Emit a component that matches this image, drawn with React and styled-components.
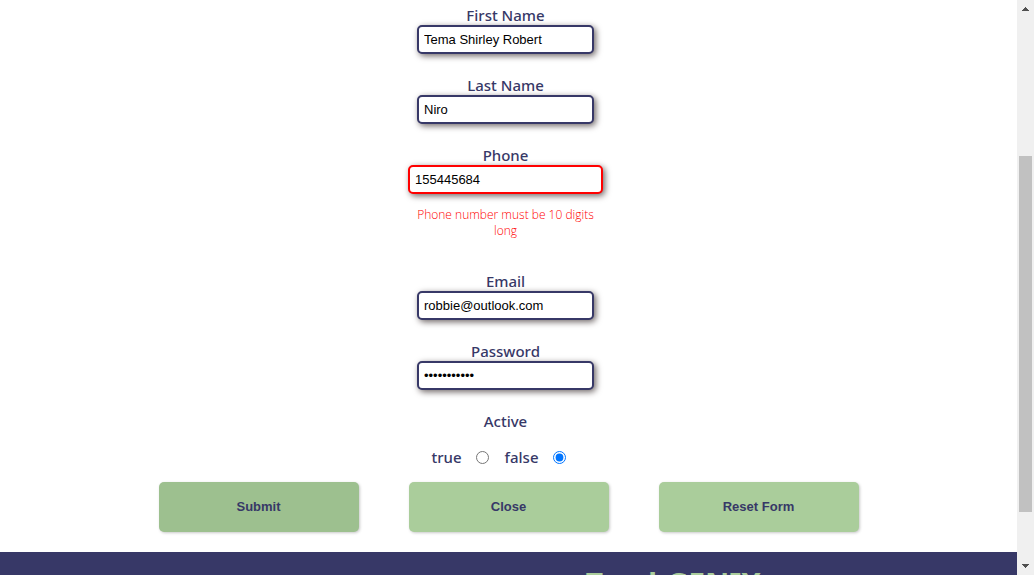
import React, { useState } from 'react';
import styled, { createGlobalStyle } from 'styled-components';

const navy = '#373867';
const green = '#aacd9b';

const GlobalStyle = createGlobalStyle`
  * { box-sizing: border-box; }
  body {
    margin: 0;
    background: #fff;
    color: ${navy};
    font-family: 'Noto Sans', 'Open Sans', sans-serif;
  }
`;

const Shell = styled.div`
  display: flex;
  height: 100vh;
  overflow: hidden;
`;

const Page = styled.div`
  flex: 1;
  min-width: 0;
  overflow: hidden;
`;

const Form = styled.form`
  display: flex;
  flex-direction: column;
  align-items: center;
  padding: 5px 0 20px;
`;

const Fields = styled.div`
  display: flex;
  flex-direction: column;
  align-items: center;
  gap: 21px;
  padding-right: 6px;
`;

const Field = styled.div`
  display: flex;
  flex-direction: column;
  align-items: center;
`;

const Label = styled.label`
  font-size: 15px;
  font-weight: 500;
  line-height: 20px;
`;

const Input = styled.input`
  width: ${({ $invalid }) => ($invalid ? 195 : 177)}px;
  height: 29px;
  padding: 0 5px;
  border: 2px solid ${({ $invalid }) => ($invalid ? '#f00' : navy)};
  border-radius: 5px;
  background: #fff;
  color: #000;
  font-family: 'Liberation Sans', Arial, sans-serif;
  font-size: 13px;
  box-shadow: 2px 2px 6px #706868;
  outline: none;
`;

const ErrorText = styled.p`
  width: 182px;
  margin: 13px 0 11px;
  color: #f00;
  font-family: 'Open Sans', 'Noto Sans', sans-serif;
  font-size: 12px;
  font-weight: 300;
  line-height: 16px;
  text-align: center;
`;

const RadioGroup = styled.fieldset`
  min-width: 0;
  margin: 0;
  padding: 0;
  border: 0;
`;

const Legend = styled(Label).attrs({ as: 'legend' })`
  width: 100%;
  padding: 0;
  margin-bottom: 16px;
  text-align: center;
`;

const RadioRow = styled.div`
  display: flex;
  gap: 16px;
  padding-right: 14px;
`;

const RadioLabel = styled(Label)`
  display: flex;
  align-items: center;
  gap: 14px;
`;

const Radio = styled.input`
  width: 13px;
  height: 13px;
  margin: 1px 0 0;
`;

const Actions = styled.div`
  display: flex;
  justify-content: center;
  gap: 50px;
  margin-top: 15px;
`;

const Button = styled.button`
  width: 200px;
  height: 50px;
  padding: 0 0 2px;
  border: 0;
  border-radius: 5px;
  background: ${({ $active }) => ($active ? '#9dc08f' : green)};
  box-shadow: 1px 1px 3px #c8c8c8;
  color: ${navy};
  font-family: 'Liberation Sans', Arial, sans-serif;
  font-size: 13px;
  font-weight: 700;
`;

const Footer = styled.footer`
  display: flex;
  justify-content: center;
  padding: 10px 0 20px 330px;
  background: ${navy};
`;

const Brand = styled.h2`
  margin: 0;
  color: ${green};
  font-size: 30px;
  font-weight: 700;
  line-height: 44px;
`;

const Scrollbar = styled.div`
  display: flex;
  flex-direction: column;
  flex: 0 0 17px;
  background: #f0f0f0;
`;

const Arrow = styled.svg`
  flex: 0 0 17px;
  width: 17px;
  height: 17px;
  fill: #505050;
`;

const Track = styled.div`
  display: flex;
  flex-direction: column;
  flex: 1;
  padding: 0 2px;
`;

const Space = styled.div`
  flex: ${({ $share }) => $share} 1 0;
`;

const Thumb = styled(Space)`
  background: #c1c1c1;
`;

function TextField({ id, label, error, ...rest }) {
  return (
    <Field>
      <Label htmlFor={id}>{label}</Label>
      <Input id={id} $invalid={Boolean(error)} aria-invalid={Boolean(error)} {...rest} />
      {error && <ErrorText>{error}</ErrorText>}
    </Field>
  );
}

export default function App() {
  const [active, setActive] = useState('false');
  return (
    <>
      <GlobalStyle />
      <Shell>
        <Page>
          <Form onSubmit={(e) => e.preventDefault()}>
            <Fields>
              <TextField id="firstName" label="First Name" defaultValue="Tema Shirley Robert" />
              <TextField id="lastName" label="Last Name" defaultValue="Niro" />
              <TextField
                id="phone"
                label="Phone"
                defaultValue="155445684"
                error="Phone number must be 10 digits long"
              />
              <TextField id="email" label="Email" type="email" defaultValue="robbie@outlook.com" />
              <TextField id="password" label="Password" type="password" defaultValue="password123" />
              <RadioGroup>
                <Legend>Active</Legend>
                <RadioRow>
                  {['true', 'false'].map((value) => (
                    <RadioLabel key={value}>
                      {value}
                      <Radio
                        type="radio"
                        name="active"
                        value={value}
                        checked={active === value}
                        onChange={() => setActive(value)}
                      />
                    </RadioLabel>
                  ))}
                </RadioRow>
              </RadioGroup>
            </Fields>
            <Actions>
              <Button type="submit" $active>Submit</Button>
              <Button type="button">Close</Button>
              <Button type="reset">Reset Form</Button>
            </Actions>
          </Form>
          <Footer>
            <Brand>TrackGENIX</Brand>
          </Footer>
        </Page>
        <Scrollbar aria-hidden="true">
          <Arrow viewBox="0 0 17 17" shapeRendering="crispEdges">
            <path d="M8 7h1v1h1v1h1v1h1v1H5v-1h1V9h1V8h1z" />
          </Arrow>
          <Track>
            <Space $share={139} />
            <Thumb $share={356} />
            <Space $share={46} />
          </Track>
          <Arrow viewBox="0 0 17 17" shapeRendering="crispEdges">
            <path d="M5 6h7v1h-1v1h-1v1H9v1H8V9H7V8H6V7H5z" />
          </Arrow>
        </Scrollbar>
      </Shell>
    </>
  );
}
